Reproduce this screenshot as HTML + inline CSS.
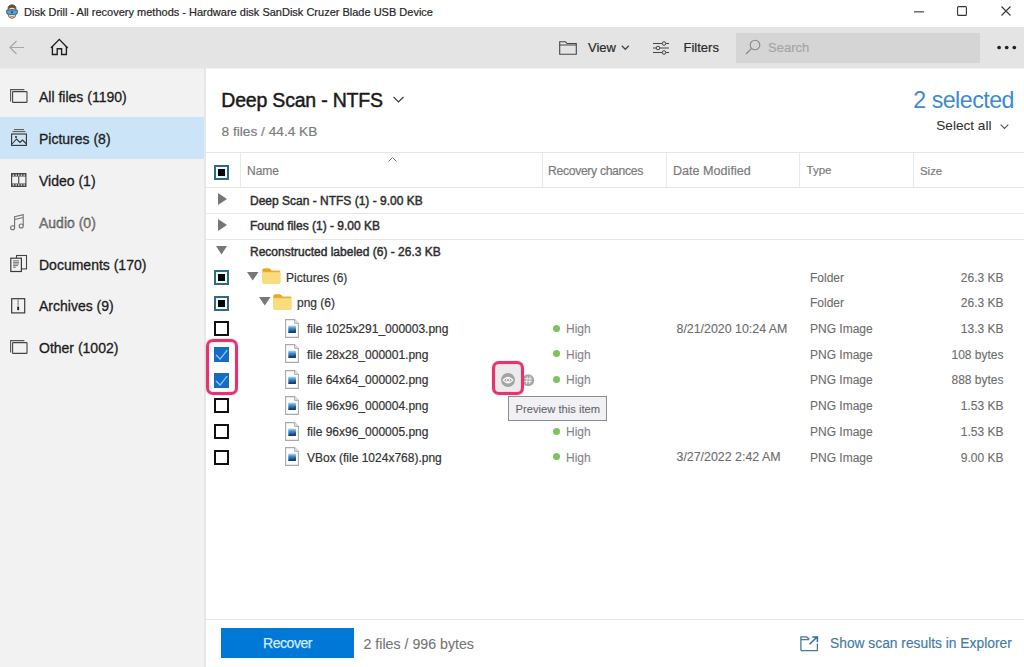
<!DOCTYPE html>
<html><head><meta charset="utf-8">
<style>
*{margin:0;padding:0;box-sizing:border-box}
html,body{width:1024px;height:667px;overflow:hidden;background:#fff;font-family:"Liberation Sans",sans-serif;}
.a{position:absolute;white-space:nowrap;line-height:1;-webkit-text-stroke:0.2px currentColor}
svg{position:absolute;overflow:visible}
#title{position:absolute;left:0;top:0;width:1024px;height:27px;background:#fff}
#tb{position:absolute;left:0;top:27px;width:1024px;height:40.5px;background:#e4e4e4}
#side{position:absolute;left:0;top:67px;width:206px;height:600px;background:#f2f2f2;border-right:2px solid #e7e7e7}
#main{position:absolute;left:206px;top:67px;width:818px;height:600px;background:#fff}
.sel{position:absolute;left:0;top:117px;width:204px;height:42px;background:#cce4f7}
.si{font-size:14px;color:#1c1c1c;left:39px;-webkit-text-stroke:0.3px #1c1c1c}
.hl{position:absolute;height:1px;background:#e6e6e6}
.vl{position:absolute;width:1px;background:#e9e9e9}
.hd{font-size:12px;color:#7b7b7b}
.grp{font-size:12px;font-weight:400;color:#2e2e2e;left:250px;-webkit-text-stroke:0.45px #2e2e2e}
.fn{font-size:12px;color:#333}
.ty{font-size:12px;color:#6c6c6c;left:810px;-webkit-text-stroke:0.1px #6c6c6c}
.sz{font-size:12px;color:#6c6c6c;right:21px;-webkit-text-stroke:0.1px #6c6c6c}
.dt{font-size:12px;color:#6c6c6c;left:677px;-webkit-text-stroke:0.1px #6c6c6c}
.hi{font-size:12px;color:#858585;left:566px;-webkit-text-stroke:0.1px #858585}
.dot{position:absolute;width:7px;height:7px;border-radius:50%;background:#7cc35c;left:553px}
.cb{position:absolute;left:214px;width:15px;height:15px;border:2px solid #111;background:#fff}
.cbi{position:absolute;left:214px;width:15px;height:15px;border:2px solid #2f6b84;background:#effaff}
.cbi:after{content:"";position:absolute;left:2px;top:2px;width:7px;height:7px;background:#000}
.cbc{position:absolute;left:214px;width:15px;height:15px;background:#166cc4}
</style></head><body>
<div id="title">
  <svg style="left:5.5px;top:3.5px" width="12" height="15" viewBox="0 0 12 15">
    <path d="M2 6 Q1.5 1 6 0.8 Q10.5 1 10 6 L10 10.5 Q9.5 14.3 6 14.3 Q2.5 14.3 2 10.5Z" fill="#f3e2cc" stroke="#6a5a4a" stroke-width="0.9"/>
    <path d="M2.1 5.8 Q1.6 1 6 0.8 Q10.4 1 9.9 5.8 Q8 3.6 6 3.8 Q4 3.6 2.1 5.8Z" fill="#7a4a22"/>
    <path d="M0.6 6.3 Q6 4.8 11.4 6.3 L11.2 9.5 Q9 11 6 10.3 Q3 11 0.8 9.5Z" fill="#5aa6d6" stroke="#2e5a78" stroke-width="0.9"/>
    <circle cx="6" cy="8" r="1.2" fill="#1d5f90"/>
    <path d="M3.8 12 Q6 13.2 8.2 12" stroke="#8a6a4a" stroke-width="0.7" fill="none"/>
  </svg>
  <span class="a" style="left:24px;top:6.5px;font-size:11px;color:#262626">Disk Drill - All recovery methods - Hardware disk SanDisk Cruzer Blade USB Device</span>
  <svg style="left:914px;top:11px" width="10" height="2"><rect x="0" y="0.3" width="10" height="1.1" fill="#333"/></svg>
  <svg style="left:957px;top:6px" width="10" height="10"><rect x="0.6" y="0.6" width="8.8" height="8.8" rx="1" fill="none" stroke="#333" stroke-width="1.1"/></svg>
  <svg style="left:1001px;top:6px" width="10" height="10"><path d="M0.5 0.5 L9.5 9.5 M9.5 0.5 L0.5 9.5" stroke="#333" stroke-width="1.1"/></svg>
</div>
<div id="tb">
  <svg style="left:9px;top:13px" width="16" height="15" viewBox="0 0 16 15"><path d="M15 7.5 H1.5 M7.5 1 L1 7.5 L7.5 14" stroke="#a8a8a8" stroke-width="1.2" fill="none"/></svg>
  <svg style="left:50px;top:11px" width="19" height="18" viewBox="0 0 19 18"><path d="M0.9 10 L9.3 1.4 L17.7 10" stroke="#1e1e1e" stroke-width="1.35" fill="none"/><path d="M2.4 8.6 V16.5 H7.2 V10.7 H11.6 V16.5 H16.4 V8.6" stroke="#1e1e1e" stroke-width="1.35" fill="none"/></svg>
  <svg style="left:559px;top:14px" width="18" height="14" viewBox="0 0 18 14"><path d="M0.7 0.7 H6.5 L8 2.5 H17.3 V13.3 H0.7 Z M0.7 4 H17.3" stroke="#444" stroke-width="1.1" fill="none"/></svg>
  <span class="a" style="left:588px;top:14px;font-size:13px;color:#2a2a2a">View</span>
  <svg style="left:621px;top:18px" width="9" height="6"><path d="M0.8 0.8 L4.3 4.3 L7.8 0.8" stroke="#444" stroke-width="1.25" fill="none"/></svg>
  <svg style="left:653px;top:14px" width="17" height="14" viewBox="0 0 17 14"><path d="M0 2.5 H16 M0 7 H16 M0 11.5 H16" stroke="#444" stroke-width="1"/><circle cx="11" cy="2.5" r="1.8" fill="#e4e4e4" stroke="#444"/><circle cx="5" cy="7" r="1.8" fill="#e4e4e4" stroke="#444"/><circle cx="11" cy="11.5" r="1.8" fill="#e4e4e4" stroke="#444"/></svg>
  <span class="a" style="left:683.5px;top:14px;font-size:13px;color:#2a2a2a">Filters</span>
  <div style="position:absolute;left:735.5px;top:5.5px;width:244.5px;height:30px;background:#d5d5d5"></div>
  <svg style="left:745px;top:12px" width="16" height="16" viewBox="0 0 16 16"><circle cx="10" cy="6" r="4.8" fill="none" stroke="#888" stroke-width="1.1"/><path d="M6.6 9.4 L1 15" stroke="#888" stroke-width="1.3"/></svg>
  <span class="a" style="left:768px;top:13.7px;font-size:13px;color:#a6a6a6">Search</span>
  <svg style="left:997px;top:18px" width="22" height="5"><circle cx="2.1" cy="2.5" r="1.85" fill="#222"/><circle cx="9.7" cy="2.5" r="1.85" fill="#222"/><circle cx="17.3" cy="2.5" r="1.85" fill="#222"/></svg>
</div>
<div id="side">
  <div class="sel" style="top:50px"></div>
  <!-- All files -->
  <svg style="left:10px;top:22px" width="18" height="14" viewBox="0 0 18 14"><path d="M0.6 12.4 V0.6 H14.4" stroke="#555" stroke-width="1.1" fill="none"/><rect x="2.6" y="2.6" width="14.4" height="10.8" rx="0.5" fill="none" stroke="#444" stroke-width="1.1"/></svg>
  <span class="a si" style="top:22.5px">All files (1190)</span>
  <!-- Pictures -->
  <svg style="left:11px;top:62px" width="16" height="17" viewBox="0 0 16 17"><path d="M3 0.6 H13 M1.5 2.6 H14.5" stroke="#555" stroke-width="1"/><rect x="0.6" y="5" width="14.8" height="11.4" fill="none" stroke="#333" stroke-width="1.1"/><path d="M1 15 L5.5 10 L9 13.5 L11.5 11 L15 14.5" stroke="#333" stroke-width="1.1" fill="none"/><circle cx="5" cy="8" r="1.1" fill="#333"/></svg>
  <span class="a si" style="top:64.5px">Pictures (8)</span>
  <!-- Video -->
  <svg style="left:10.5px;top:106px" width="16" height="14" viewBox="0 0 16 14"><rect x="0.6" y="0.6" width="14.3" height="12.8" fill="none" stroke="#404040" stroke-width="1.1"/><rect x="0.6" y="0.6" width="14.3" height="2.9" fill="#404040"/><rect x="0.6" y="10.5" width="14.3" height="2.9" fill="#404040"/><path d="M7.75 3.4 V10.6" stroke="#404040" stroke-width="1.1"/><g fill="#f2f2f2"><rect x="1.7" y="1.4" width="1.4" height="1.4"/><rect x="4.5" y="1.4" width="1.4" height="1.4"/><rect x="7.1" y="1.4" width="1.4" height="1.4"/><rect x="9.8" y="1.4" width="1.4" height="1.4"/><rect x="12.5" y="1.4" width="1.4" height="1.4"/><rect x="1.7" y="11.3" width="1.4" height="1.4"/><rect x="4.5" y="11.3" width="1.4" height="1.4"/><rect x="7.1" y="11.3" width="1.4" height="1.4"/><rect x="9.8" y="11.3" width="1.4" height="1.4"/><rect x="12.5" y="11.3" width="1.4" height="1.4"/></g></svg>
  <span class="a si" style="top:106.5px">Video (1)</span>
  <!-- Audio -->
  <svg style="left:10px;top:147px" width="15" height="17" viewBox="0 0 15 17"><path d="M4.6 13.5 V2.8 L13.2 0.8 V11.5 M4.6 5.5 L13.2 3.5" stroke="#707070" stroke-width="1.1" fill="none"/><circle cx="2.6" cy="13.8" r="2" fill="none" stroke="#707070" stroke-width="1.1"/><circle cx="11.2" cy="12" r="2" fill="none" stroke="#707070" stroke-width="1.1"/></svg>
  <span class="a si" style="top:148.5px;color:#8c8c8c">Audio (0)</span>
  <!-- Documents -->
  <svg style="left:10px;top:187px" width="18" height="19" viewBox="0 0 18 19"><rect x="6.5" y="1.5" width="10" height="13.4" fill="#f2f2f2" stroke="#444" stroke-width="1.1"/><rect x="0.8" y="4.2" width="10.6" height="13.3" fill="#f2f2f2" stroke="#3a3a3a" stroke-width="1.2"/><path d="M3 6.8 H9 M3 8.4 H9 M3 10 H9 M3 11.6 H8 M3 13.2 H6" stroke="#777" stroke-width="1"/></svg>
  <span class="a si" style="top:190.5px">Documents (170)</span>
  <!-- Archives -->
  <svg style="left:11px;top:230.5px" width="14.5" height="16" viewBox="0 0 14.5 16"><rect x="0.7" y="0.7" width="13" height="14.2" fill="none" stroke="#3a3a3a" stroke-width="1.2"/><path d="M7.1 1.5 V9.5" stroke="#333" stroke-width="0.9" stroke-dasharray="1.2 0.4"/><rect x="6.2" y="9" width="1.9" height="3.2" fill="#222"/></svg>
  <span class="a si" style="top:232px">Archives (9)</span>
  <!-- Other -->
  <svg style="left:10px;top:273px" width="18" height="14" viewBox="0 0 18 14"><path d="M0.6 12.4 V0.6 H14.4" stroke="#555" stroke-width="1.1" fill="none"/><rect x="2.6" y="2.6" width="14.4" height="10.8" rx="0.5" fill="none" stroke="#444" stroke-width="1.1"/></svg>
  <span class="a si" style="top:274px">Other (1002)</span>
</div>
<div id="main"></div>
<!--MAIN-->
<svg width="0" height="0" style="position:absolute"><defs><linearGradient id="gimg" x1="0" y1="0" x2="0" y2="1"><stop offset="0" stop-color="#a6dcf5"/><stop offset="0.4" stop-color="#3f88c4"/><stop offset="1" stop-color="#143f7a"/></linearGradient></defs></svg>
<span class="a " style="left:221.3px;top:91.09px;font-size:19.5px;color:#1a1a1a;letter-spacing:-0.2px;-webkit-text-stroke:0.45px #1a1a1a">Deep Scan - NTFS</span>
<svg style="left:393px;top:96px" width="11" height="7"><path d="M0.5 0.8 L5.5 5.8 L10.5 0.8" stroke="#333" stroke-width="1.2" fill="none"/></svg>
<span class="a " style="left:221.5px;top:124.70px;font-size:13.7px;color:#7c7c7c">8 files / 44.4 KB</span>
<span class="a " style="left:913.3px;top:88.56px;font-size:23.2px;color:#3e8acb;letter-spacing:-0.5px;-webkit-text-stroke:0">2 selected</span>
<span class="a " style="left:936.3px;top:118.79px;font-size:13.6px;color:#2e2e2e;-webkit-text-stroke:0.05px #2e2e2e">Select all</span>
<svg style="left:999.5px;top:124px" width="9" height="6"><path d="M0.7 0.7 L4.5 4.5 L8.3 0.7" stroke="#555" stroke-width="1.2" fill="none"/></svg>
<div class="hl" style="left:206px;top:152px;width:818px"></div>
<div class="hl" style="left:206px;top:187px;width:818px"></div>
<div class="vl" style="left:240px;top:153px;height:34px"></div>
<div class="vl" style="left:542px;top:153px;height:34px"></div>
<div class="vl" style="left:666px;top:153px;height:34px"></div>
<div class="vl" style="left:799px;top:153px;height:34px"></div>
<div class="vl" style="left:913px;top:153px;height:34px"></div>
<div class="cbi" style="top:164.5px"></div>
<span class="a hd" style="left:247px;top:165.04px;font-size:12px;">Name</span>
<svg style="left:388px;top:156.5px" width="9" height="5"><path d="M0.5 4.5 L4.5 0.5 L8.5 4.5" stroke="#777" stroke-width="1" fill="none"/></svg>
<span class="a hd" style="left:548px;top:164.87px;font-size:12.2px;letter-spacing:-0.33px">Recovery chances</span>
<span class="a hd" style="left:673px;top:164.53px;font-size:12.6px;">Date Modified</span>
<span class="a hd" style="left:806.5px;top:165.47px;font-size:11.5px;">Type</span>
<span class="a hd" style="left:920px;top:165.55px;font-size:11.4px;">Size</span>
<span class="a grp" style="left:250px;top:195.14px;font-size:12px;">Deep Scan - NTFS (1) - 9.00 KB</span>
<svg style="left:217.5px;top:193.10px" width="9" height="12"><path d="M0 0 L9 6 L0 12Z" fill="#777"/></svg>
<span class="a grp" style="left:250px;top:219.96px;font-size:12px;">Found files (1) - 9.00 KB</span>
<svg style="left:217.5px;top:218.82px" width="9" height="12"><path d="M0 0 L9 6 L0 12Z" fill="#777"/></svg>
<span class="a grp" style="left:250px;top:245.68px;font-size:12px;">Reconstructed labeled (6) - 26.3 KB</span>
<svg style="left:216px;top:246.34px" width="11" height="8.5"><path d="M0 0 L11 0 L5.5 8.5Z" fill="#777"/></svg>
<div class="hl" style="left:206px;top:213px;width:818px"></div>
<div class="hl" style="left:206px;top:239px;width:818px"></div>
<div class="cbi" style="top:269.86px"></div>
<svg style="left:247px;top:271.76px" width="11.5" height="8.5"><path d="M0 0 L11.5 0 L5.75 8.5Z" fill="#777"/></svg>
<svg style="left:261.8px;top:268.06px" width="19" height="16" viewBox="0 0 19 16"><path d="M0.5 2 Q0.5 0.5 2 0.5 H7 Q8.5 0.5 9.5 2.5 H17.3 Q18.3 2.5 18.3 3.5 V14.5 Q18.3 15.5 17.3 15.5 H1.5 Q0.5 15.5 0.5 14.5Z" fill="#e3b23c"/><path d="M0.5 2 Q0.5 0.5 2 0.5 H6.5 Q8.5 0.5 9.2 3.6 H0.5Z" fill="#e9a91c"/><path d="M0.5 4.2 H18.3 V14.5 Q18.3 15.5 17.3 15.5 H1.5 Q0.5 15.5 0.5 14.5Z" fill="#f9dc7c"/></svg>
<span class="a fn" style="left:286px;top:271.60px;font-size:12px;">Pictures (6)</span>
<span class="a ty" style="left:810px;top:271.60px;font-size:12px;">Folder</span>
<span class="a sz" style="right:20.5px;top:271.60px;font-size:12px;">26.3 KB</span>
<div class="cbi" style="top:295.58px"></div>
<svg style="left:259px;top:297.48px" width="11.5" height="8.5"><path d="M0 0 L11.5 0 L5.75 8.5Z" fill="#777"/></svg>
<svg style="left:273px;top:293.78px" width="19" height="16" viewBox="0 0 19 16"><path d="M0.5 2 Q0.5 0.5 2 0.5 H7 Q8.5 0.5 9.5 2.5 H17.3 Q18.3 2.5 18.3 3.5 V14.5 Q18.3 15.5 17.3 15.5 H1.5 Q0.5 15.5 0.5 14.5Z" fill="#e3b23c"/><path d="M0.5 2 Q0.5 0.5 2 0.5 H6.5 Q8.5 0.5 9.2 3.6 H0.5Z" fill="#e9a91c"/><path d="M0.5 4.2 H18.3 V14.5 Q18.3 15.5 17.3 15.5 H1.5 Q0.5 15.5 0.5 14.5Z" fill="#f9dc7c"/></svg>
<span class="a fn" style="left:297px;top:297.32px;font-size:12px;">png (6)</span>
<span class="a ty" style="left:810px;top:297.32px;font-size:12px;">Folder</span>
<span class="a sz" style="right:20.5px;top:297.32px;font-size:12px;">26.3 KB</span>
<div class="cb" style="top:321.30px"></div>
<svg style="left:285px;top:318.70px" width="14" height="19" viewBox="0 0 14 19"><path d="M0.6 0.6 H9.6 L13.4 4.4 V18.4 H0.6Z" fill="#fff" stroke="#a9a9a9" stroke-width="1.1"/><path d="M9.6 0.6 V4.4 H13.4" fill="#e8e8e8" stroke="#a9a9a9" stroke-width="1"/><rect x="3.3" y="6.6" width="7.6" height="7.4" fill="url(#gimg)"/><path d="M3.3 14 L5.5 11.2 L7.5 12.4 L10.9 9.8 V14Z" fill="#0f3a70" opacity="0.6"/></svg>
<span class="a fn" style="left:307px;top:323.04px;font-size:12px;">file 1025x291_000003.png</span>
<div class="dot" style="top:324.70px"></div>
<span class="a hi" style="left:566px;top:323.04px;font-size:12px;">High</span>
<span class="a dt" style="left:676.5px;top:322.70px;font-size:12.4px;">8/21/2020 10:24 AM</span>
<span class="a ty" style="left:810px;top:323.04px;font-size:12px;">PNG Image</span>
<span class="a sz" style="right:20.5px;top:323.04px;font-size:12px;">13.3 KB</span>
<div class="cbc" style="top:347.02px"><svg style="left:0;top:0" width="15" height="15"><path d="M2 8.1 L6.1 12.1 L13.2 3.2" stroke="#86ccfa" stroke-width="1.35" fill="none"/></svg></div>
<svg style="left:285px;top:344.42px" width="14" height="19" viewBox="0 0 14 19"><path d="M0.6 0.6 H9.6 L13.4 4.4 V18.4 H0.6Z" fill="#fff" stroke="#a9a9a9" stroke-width="1.1"/><path d="M9.6 0.6 V4.4 H13.4" fill="#e8e8e8" stroke="#a9a9a9" stroke-width="1"/><rect x="3.3" y="6.6" width="7.6" height="7.4" fill="url(#gimg)"/><path d="M3.3 14 L5.5 11.2 L7.5 12.4 L10.9 9.8 V14Z" fill="#0f3a70" opacity="0.6"/></svg>
<span class="a fn" style="left:307px;top:348.76px;font-size:12px;">file 28x28_000001.png</span>
<div class="dot" style="top:350.42px"></div>
<span class="a hi" style="left:566px;top:348.76px;font-size:12px;">High</span>
<span class="a ty" style="left:810px;top:348.76px;font-size:12px;">PNG Image</span>
<span class="a sz" style="right:20.5px;top:348.76px;font-size:12px;">108 bytes</span>
<div class="cbc" style="top:372.74px"><svg style="left:0;top:0" width="15" height="15"><path d="M2 8.1 L6.1 12.1 L13.2 3.2" stroke="#86ccfa" stroke-width="1.35" fill="none"/></svg></div>
<svg style="left:285px;top:370.14px" width="14" height="19" viewBox="0 0 14 19"><path d="M0.6 0.6 H9.6 L13.4 4.4 V18.4 H0.6Z" fill="#fff" stroke="#a9a9a9" stroke-width="1.1"/><path d="M9.6 0.6 V4.4 H13.4" fill="#e8e8e8" stroke="#a9a9a9" stroke-width="1"/><rect x="3.3" y="6.6" width="7.6" height="7.4" fill="url(#gimg)"/><path d="M3.3 14 L5.5 11.2 L7.5 12.4 L10.9 9.8 V14Z" fill="#0f3a70" opacity="0.6"/></svg>
<span class="a fn" style="left:307px;top:374.48px;font-size:12px;">file 64x64_000002.png</span>
<div class="dot" style="top:376.14px"></div>
<span class="a hi" style="left:566px;top:374.48px;font-size:12px;">High</span>
<span class="a ty" style="left:810px;top:374.48px;font-size:12px;">PNG Image</span>
<span class="a sz" style="right:20.5px;top:374.48px;font-size:12px;">888 bytes</span>
<div class="cb" style="top:398.46px"></div>
<svg style="left:285px;top:395.86px" width="14" height="19" viewBox="0 0 14 19"><path d="M0.6 0.6 H9.6 L13.4 4.4 V18.4 H0.6Z" fill="#fff" stroke="#a9a9a9" stroke-width="1.1"/><path d="M9.6 0.6 V4.4 H13.4" fill="#e8e8e8" stroke="#a9a9a9" stroke-width="1"/><rect x="3.3" y="6.6" width="7.6" height="7.4" fill="url(#gimg)"/><path d="M3.3 14 L5.5 11.2 L7.5 12.4 L10.9 9.8 V14Z" fill="#0f3a70" opacity="0.6"/></svg>
<span class="a fn" style="left:307px;top:400.20px;font-size:12px;">file 96x96_000004.png</span>
<span class="a ty" style="left:810px;top:400.20px;font-size:12px;">PNG Image</span>
<span class="a sz" style="right:20.5px;top:400.20px;font-size:12px;">1.53 KB</span>
<div class="cb" style="top:424.18px"></div>
<svg style="left:285px;top:421.58px" width="14" height="19" viewBox="0 0 14 19"><path d="M0.6 0.6 H9.6 L13.4 4.4 V18.4 H0.6Z" fill="#fff" stroke="#a9a9a9" stroke-width="1.1"/><path d="M9.6 0.6 V4.4 H13.4" fill="#e8e8e8" stroke="#a9a9a9" stroke-width="1"/><rect x="3.3" y="6.6" width="7.6" height="7.4" fill="url(#gimg)"/><path d="M3.3 14 L5.5 11.2 L7.5 12.4 L10.9 9.8 V14Z" fill="#0f3a70" opacity="0.6"/></svg>
<span class="a fn" style="left:307px;top:425.92px;font-size:12px;">file 96x96_000005.png</span>
<div class="dot" style="top:427.58px"></div>
<span class="a hi" style="left:566px;top:425.92px;font-size:12px;">High</span>
<span class="a ty" style="left:810px;top:425.92px;font-size:12px;">PNG Image</span>
<span class="a sz" style="right:20.5px;top:425.92px;font-size:12px;">1.53 KB</span>
<div class="cb" style="top:449.90px"></div>
<svg style="left:285px;top:447.30px" width="14" height="19" viewBox="0 0 14 19"><path d="M0.6 0.6 H9.6 L13.4 4.4 V18.4 H0.6Z" fill="#fff" stroke="#a9a9a9" stroke-width="1.1"/><path d="M9.6 0.6 V4.4 H13.4" fill="#e8e8e8" stroke="#a9a9a9" stroke-width="1"/><rect x="3.3" y="6.6" width="7.6" height="7.4" fill="url(#gimg)"/><path d="M3.3 14 L5.5 11.2 L7.5 12.4 L10.9 9.8 V14Z" fill="#0f3a70" opacity="0.6"/></svg>
<span class="a fn" style="left:307px;top:451.64px;font-size:12px;">VBox (file 1024x768).png</span>
<div class="dot" style="top:453.30px"></div>
<span class="a hi" style="left:566px;top:451.64px;font-size:12px;">High</span>
<span class="a dt" style="left:676.5px;top:451.30px;font-size:12.4px;">3/27/2022 2:42 AM</span>
<span class="a ty" style="left:810px;top:451.64px;font-size:12px;">PNG Image</span>
<span class="a sz" style="right:20.5px;top:451.64px;font-size:12px;">9.00 KB</span>
<div style="position:absolute;left:494px;top:363px;width:29px;height:31px;background:#ebebeb"></div>
<svg style="left:521px;top:373.24px" width="15" height="14" viewBox="0 0 15 14"><circle cx="7.2" cy="7.2" r="6" fill="#a6a6a6"/><path d="M6.2 3.5 L5.6 11 M9.2 3.5 L8.6 11 M3.5 5.8 H11 M3.3 8.6 H10.8" stroke="#f4f4f4" stroke-width="0.9"/></svg>
<svg style="left:501px;top:373.24px" width="14" height="14" viewBox="0 0 14 14"><circle cx="7" cy="7" r="7" fill="#a3a3a3"/><path d="M2.2 7.2 Q7 1.6 11.8 7.2 Q7 12.6 2.2 7.2Z" fill="none" stroke="#fff" stroke-width="1.1"/><circle cx="7" cy="7.2" r="1.7" fill="none" stroke="#fff" stroke-width="1"/></svg>
<div style="position:absolute;left:206.3px;top:339.2px;width:31.6px;height:55.6px;border:3.4px solid #e6336d;border-radius:7px;box-shadow:0 0 1.5px rgba(229,51,111,0.5), inset 0 0 1.5px rgba(229,51,111,0.4)"></div>
<div style="position:absolute;left:492px;top:361.3px;width:32.3px;height:33.6px;border:3.4px solid #e6336d;border-radius:7px;box-shadow:0 0 1.5px rgba(229,51,111,0.5), inset 0 0 1.5px rgba(229,51,111,0.4)"></div>
<div style="position:absolute;left:508px;top:396px;width:98.5px;height:24.5px;border:1px solid #8c8c8c;background:#f0f0f5"></div>
<span class="a " style="left:515.5px;top:403.72px;font-size:11.2px;color:#626262;-webkit-text-stroke:0.05px #626262">Preview this item</span>
<div class="hl" style="left:206px;top:619px;width:818px"></div>
<div style="position:absolute;left:221px;top:628px;width:133px;height:30px;background:#0078d7"></div>
<span class="a " style="left:263px;top:635.85px;font-size:14px;color:#d4eefd;letter-spacing:-0.45px;-webkit-text-stroke:0.25px #d4eefd">Recover</span>
<span class="a " style="left:363.5px;top:636.58px;font-size:14.2px;color:#747474;-webkit-text-stroke:0.1px #747474">2 files / 996 bytes</span>
<svg style="left:799.5px;top:635.8px" width="19" height="16" viewBox="0 0 19 16"><path d="M0.9 3.6 H9.2 M0.9 14.6 V0.9 H6.5 L8.6 2.6 H9.4 M0.9 14.6 H17.4 V7.6" stroke="#4a7797" stroke-width="1.3" fill="none"/><path d="M9.6 8.3 L16.8 1.2 M12.4 1 H17.4 V6" stroke="#2b6ba3" stroke-width="1.5" fill="none"/></svg>
<span class="a " style="left:830px;top:636.62px;font-size:13.8px;color:#4279a8;-webkit-text-stroke:0.15px #4279a8">Show scan results in Explorer</span>
<div style="position:absolute;left:0;top:67px;width:1024px;height:1px;background:#e4e4e4"></div><div style="position:absolute;left:0;top:68px;width:1024px;height:1px;background:rgba(228,228,228,0.45)"></div>
<!--/MAIN-->
</body></html>
